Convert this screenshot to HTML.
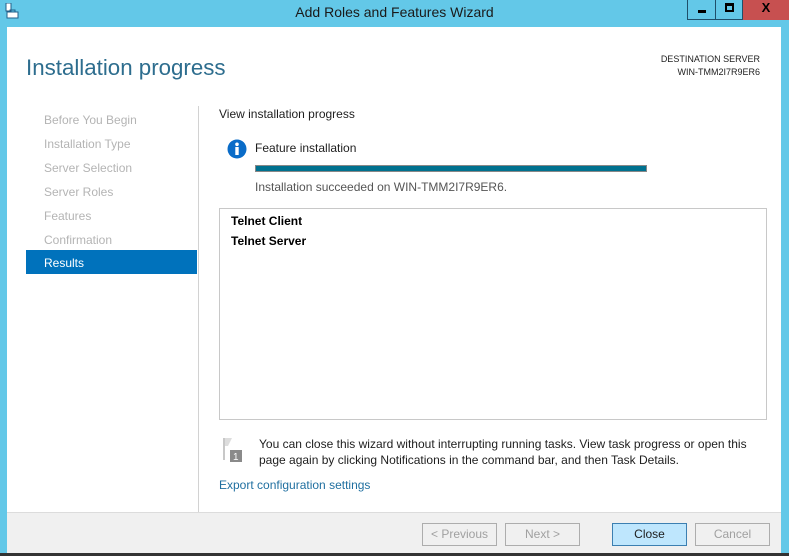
<!DOCTYPE html>
<html><head><style>
*{margin:0;padding:0;box-sizing:border-box}
body{width:789px;height:556px;background:#63c8e8;position:relative;overflow:hidden;font-family:"Liberation Sans",sans-serif;font-size:12px;color:#1e1e1e}
.a{position:absolute}
.win{left:7px;top:27px;width:774px;height:527px;background:#fff}
.foot{left:7px;top:512px;width:774px;height:42px;background:#f0f0f0;border-top:1px solid #dcdcdc}
.btn{top:523px;height:23px;border:1px solid #adadad;background:#f0f0f0;color:#a0a0a0;text-align:center;line-height:21px;font-size:12px}
.nav{left:44px;color:#b4b4b4;font-size:12px}
</style></head><body>
<div class="a" style="left:0;top:0;width:789px;height:27px;background:#63c8e8"></div>
<svg class="a" style="left:5px;top:3px" width="14" height="16"><rect x="1" y="0" width="5" height="8" fill="#fff" stroke="#1f5f8a"/><rect x="2" y="9" width="11" height="6" fill="#fff" stroke="#1f5f8a"/><rect x="5" y="7" width="5" height="2" fill="none" stroke="#1f5f8a"/></svg>
<div class="a" style="left:0;top:4px;width:789px;text-align:center;font-size:14px;color:#1a1a1a">Add Roles and Features Wizard</div>
<div class="a" style="left:687px;top:0;width:29px;height:20px;border:1px solid #1f4f6a;border-top:0"><div class="a" style="left:10px;top:10px;width:8px;height:3px;background:#000"></div></div>
<div class="a" style="left:715px;top:0;width:28px;height:20px;border:1px solid #1f4f6a;border-top:0"><div class="a" style="left:9px;top:3px;width:9px;height:9px;border:2px solid #000;border-top-width:3px"></div></div>
<div class="a" style="left:743px;top:0;width:46px;height:20px;background:#c75050;color:#000;font-weight:bold;text-align:center;font-size:13px;line-height:16px">X</div>
<div class="a win"></div>
<div class="a" style="left:26px;top:55px;font-size:22.3px;color:#2d6d8e">Installation progress</div>
<div class="a" style="left:600px;top:53px;width:160px;text-align:right;font-size:9px;line-height:13px;color:#1e1e1e">DESTINATION SERVER<br>WIN-TMM2I7R9ER6</div>
<div class="a nav" style="top:113px">Before You Begin</div>
<div class="a nav" style="top:137px">Installation Type</div>
<div class="a nav" style="top:161px">Server Selection</div>
<div class="a nav" style="top:185px">Server Roles</div>
<div class="a nav" style="top:209px">Features</div>
<div class="a nav" style="top:233px">Confirmation</div>
<div class="a" style="left:26px;top:250px;width:171px;height:24px;background:#0072bc;color:#fff;padding:6px 0 0 18px">Results</div>
<div class="a" style="left:198px;top:106px;width:1px;height:406px;background:#d2d2d2"></div>
<div class="a" style="left:219px;top:107px">View installation progress</div>
<svg class="a" style="left:227px;top:139px" width="20" height="20"><circle cx="10" cy="10" r="9.5" fill="#0a6cc8"/><rect x="8.3" y="8" width="3.4" height="8" fill="#fff"/><circle cx="10" cy="5.3" r="1.8" fill="#fff"/></svg>
<div class="a" style="left:255px;top:141px">Feature installation</div>
<div class="a" style="left:255px;top:165px;width:392px;height:7px;background:#00718f;border:1px solid #888"></div>
<div class="a" style="left:255px;top:180px;color:#555">Installation succeeded on WIN-TMM2I7R9ER6.</div>
<div class="a" style="left:219px;top:208px;width:548px;height:212px;border:1px solid #c8c8c8"></div>
<div class="a" style="left:231px;top:214px;font-weight:bold;color:#000">Telnet Client</div>
<div class="a" style="left:231px;top:234px;font-weight:bold;color:#000">Telnet Server</div>
<svg class="a" style="left:222px;top:437px" width="22" height="26"><path d="M2 1 L2 23" stroke="#c8c8c8" stroke-width="2"/><path d="M3 1 L10 1 L6 9 L3 9Z" fill="#ddd"/><rect x="8" y="13" width="12" height="12" fill="#8a8a8a"/><text x="11" y="23" font-size="10" fill="#fff" font-family="Liberation Sans">1</text></svg>
<div class="a" style="left:259px;top:436px;width:510px;line-height:16px">You can close this wizard without interrupting running tasks. View task progress or open this page again by clicking Notifications in the command bar, and then Task Details.</div>
<div class="a" style="left:219px;top:478px;color:#1f6fa0">Export configuration settings</div>
<div class="a foot"></div>
<div class="a btn" style="left:422px;width:75px">&lt; Previous</div>
<div class="a btn" style="left:505px;width:75px">Next &gt;</div>
<div class="a btn" style="left:612px;width:75px;background:#bee6fd;border-color:#3c7fb1;color:#1e1e1e">Close</div>
<div class="a btn" style="left:695px;width:75px">Cancel</div>
<div class="a" style="left:0;top:553px;width:789px;height:3px;background:#333"></div>
</body></html>
